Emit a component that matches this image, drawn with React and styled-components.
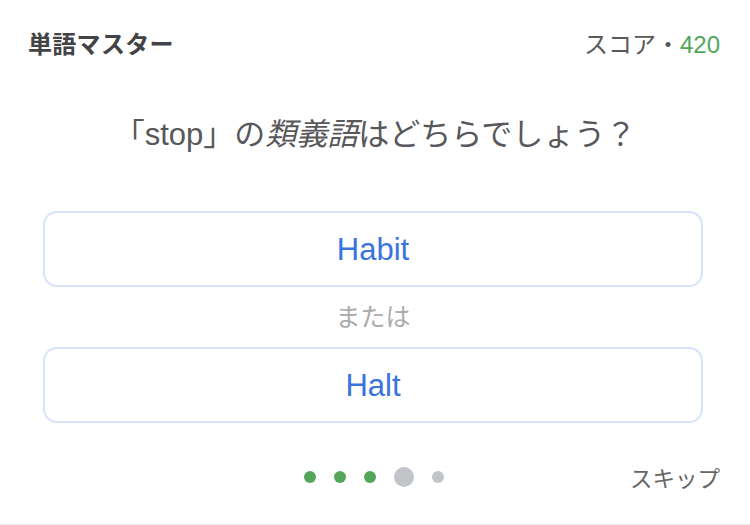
import React from 'react'
import styled, { createGlobalStyle } from 'styled-components'

const GlobalStyle = createGlobalStyle`
    html, body {
        margin: 0;
        padding: 0;
        background: #ffffff;
    }
    body {
        font-family: "Liberation Sans", "Noto Sans CJK JP", sans-serif;
    }
`

const Page = styled.div`
    width: 750px;
    height: 524px;
    display: flex;
    flex-direction: column;
    border-bottom: 1px solid #ececec;
    background: #ffffff;
`

const Header = styled.header`
    height: 84px;
    display: flex;
    align-items: center;
    justify-content: space-between;
    padding: 0 30px 0 28px;
`

const Title = styled.h1`
    margin: 0;
    font-size: 24px;
    font-weight: 700;
    color: #434346;
    letter-spacing: 0.3px;
`

const Score = styled.div`
    font-size: 24px;
    color: #5a5a5a;
`

const ScoreValue = styled.span`
    color: #4ea85a;
`

const Question = styled.p`
    margin: 31px 0 0;
    height: 40px;
    line-height: 40px;
    text-align: center;
    font-size: 31px;
    color: #58585b;
`

const Emph = styled.em`
    font-style: italic;
`

const Options = styled.div`
    margin: 56px 47px 0 43px;
    display: flex;
    flex-direction: column;
`

const Option = styled.button`
    height: 76px;
    width: 100%;
    border: 2px solid #d8e3fb;
    border-radius: 14px;
    background: #ffffff;
    color: #3a73e0;
    font-family: "Liberation Sans", "Noto Sans CJK JP", sans-serif;
    font-size: 31px;
    padding-top: 2px;
    cursor: pointer;
`

const Or = styled.div`
    height: 60px;
    line-height: 60px;
    text-align: center;
    font-size: 25px;
    color: #ababab;
`

const Footer = styled.footer`
    margin-top: 34px;
    height: 40px;
    display: grid;
    grid-template-columns: 1fr auto 1fr;
    align-items: center;
    padding: 0 30px 0 28px;
`

const Dots = styled.div`
    grid-column: 2;
    display: flex;
    align-items: center;
    gap: 18px;
`

const Dot = styled.span`
    width: ${p => (p.current ? 20 : 12)}px;
    height: ${p => (p.current ? 20 : 12)}px;
    border-radius: 50%;
    background: ${p => (p.done ? '#55a55c' : '#c1c4c9')};
`

const Skip = styled.button`
    justify-self: end;
    border: none;
    background: none;
    padding: 0;
    font-family: "Liberation Sans", "Noto Sans CJK JP", sans-serif;
    font-size: 22.5px;
    color: #666666;
    cursor: pointer;
`

const steps = ['done', 'done', 'done', 'current', 'todo']

function App() {
    return (
        <Page>
            <GlobalStyle />
            <Header>
                <Title>単語マスター</Title>
                <Score>
                    スコア・<ScoreValue>420</ScoreValue>
                </Score>
            </Header>
            <Question>
                「stop」の<Emph>類義語</Emph>はどちらでしょう？
            </Question>
            <Options>
                <Option>Habit</Option>
                <Or>または</Or>
                <Option>Halt</Option>
            </Options>
            <Footer>
                <Dots>
                    {steps.map((s, i) => (
                        <Dot key={i} done={s === 'done'} current={s === 'current'} />
                    ))}
                </Dots>
                <Skip>スキップ</Skip>
            </Footer>
        </Page>
    )
}

export default App
